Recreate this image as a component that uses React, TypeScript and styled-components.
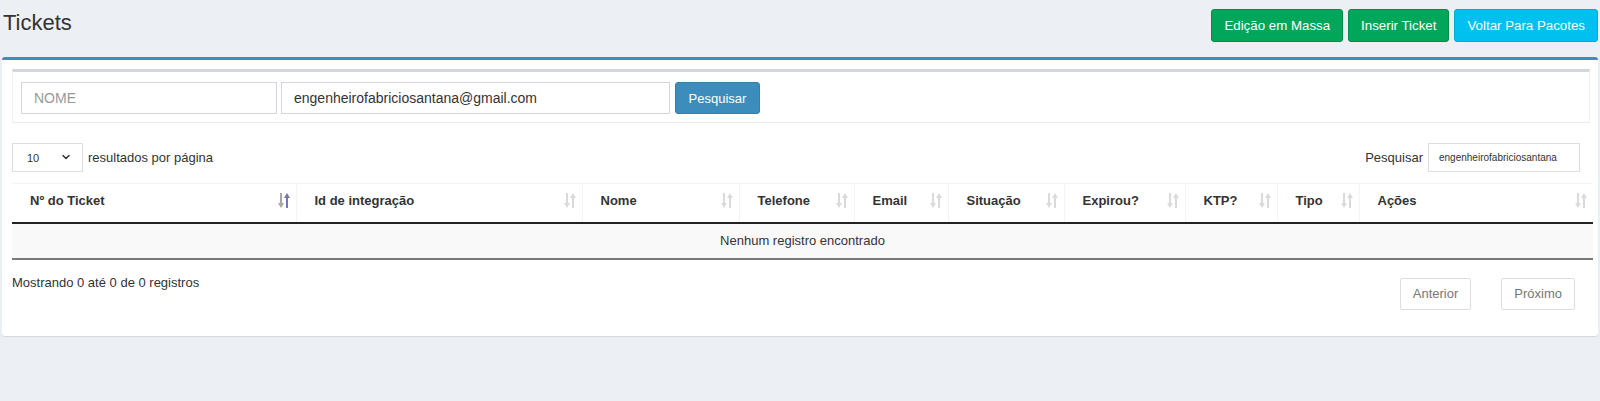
import styled, { createGlobalStyle } from "styled-components";
import { ChevronDown } from "lucide-react";

const GlobalStyle = createGlobalStyle`
    body {
        margin:0;
        background:#ecf0f5;
        font-family:"Liberation Sans", Arial, sans-serif;
        color:#333;
    }
    * { box-sizing:border-box; }
`;

const columns = [
    { label: "Nº do Ticket", width: 284, active: true },
    { label: "Id de integração", width: 286 },
    { label: "Nome", width: 157 },
    { label: "Telefone", width: 115 },
    { label: "Email", width: 94 },
    { label: "Situação", width: 116 },
    { label: "Expirou?", width: 121 },
    { label: "KTP?", width: 92 },
    { label: "Tipo", width: 82 },
    { label: "Ações", width: 234 },
];

// two arrows, the up one tinted when the column is sorted
const SortIcon = ({ active }: { active?: boolean }) => (
    <svg width="12" height="17" viewBox="0 0 12 17">
        <path d="M2 1h2v10h2l-3 5-3-5h2z" fill={active ? "#a8a8a8" : "#dadada"} />
        <path d="M9 1l3 5h-2v10H8V6H6z" fill={active ? "#7474b8" : "#dadada"} />
    </svg>
);

const App = () => {
    return (
        <Page>
            <GlobalStyle />
            <HeaderBar>
                <Title>Tickets</Title>
                <ButtonGroup>
                    <HeadButton $variant="success">Edição em Massa</HeadButton>
                    <HeadButton $variant="success">Inserir Ticket</HeadButton>
                    <HeadButton $variant="info">Voltar Para Pacotes</HeadButton>
                </ButtonGroup>
            </HeaderBar>

            <Box>
                <FilterPanel>
                    <TextInput $width={256} placeholder="NOME" />
                    <TextInput $width={389} defaultValue="engenheirofabriciosantana@gmail.com" />
                    <SearchButton>Pesquisar</SearchButton>
                </FilterPanel>

                <LengthRow>
                    <LengthLabel>
                        <SelectWrap>
                            <Select defaultValue="10">
                                <option>10</option>
                                <option>25</option>
                                <option>50</option>
                                <option>100</option>
                            </Select>
                            <SelectArrow>
                                <ChevronDown size={12} strokeWidth={3} />
                            </SelectArrow>
                        </SelectWrap>
                        resultados por página
                    </LengthLabel>
                    <LengthLabel>
                        Pesquisar
                        <FilterInput defaultValue="engenheirofabriciosantana" />
                    </LengthLabel>
                </LengthRow>

                <Table>
                    <colgroup>
                        {columns.map((c) => (
                            <col key={c.label} style={{ width: c.width }} />
                        ))}
                    </colgroup>
                    <thead>
                        <tr>
                            {columns.map((c) => (
                                <Th key={c.label}>
                                    <HeadInner>
                                        <span>{c.label}</span>
                                        <SortIcon active={c.active} />
                                    </HeadInner>
                                </Th>
                            ))}
                        </tr>
                    </thead>
                    <tbody>
                        <tr>
                            <EmptyCell colSpan={columns.length}>Nenhum registro encontrado</EmptyCell>
                        </tr>
                    </tbody>
                </Table>

                <FooterRow>
                    <Info>Mostrando 0 até 0 de 0 registros</Info>
                    <Paging>
                        <PageButton>Anterior</PageButton>
                        <PageButton>Próximo</PageButton>
                    </Paging>
                </FooterRow>
            </Box>
        </Page>
    )
}

const Page = styled.div`
    min-height:401px;
    padding:0 2px;
`;

const HeaderBar = styled.div`
    display:flex;
    justify-content:space-between;
    align-items:flex-start;
    height:57px;
`;

const Title = styled.h1`
    margin:11px 0 0 1px;
    font-size:22px;
    font-weight:normal;
    line-height:24px;
    color:#333;
`;

const ButtonGroup = styled.div`
    display:flex;
    gap:5px;
    margin-top:9px;
`;

const HeadButton = styled.button<{ $variant: "success" | "info" }>`
    height:33px;
    padding:0 12px;
    font-family:inherit;
    font-size:13.3px;
    color:#fff;
    border-radius:3px;
    border:1px solid ${(p) => (p.$variant === "success" ? "#008d4c" : "#00acd6")};
    background:${(p) => (p.$variant === "success" ? "#00a65a" : "#00c0ef")};
    cursor:pointer;
`;

const Box = styled.div`
    background:#fff;
    border-top:3px solid #3c8dbc;
    border-radius:3px;
    box-shadow:0 1px 1px rgba(0,0,0,.1);
    padding:9px 5px 26px 10px;
`;

const FilterPanel = styled.div`
    display:flex;
    align-items:center;
    gap:4px;
    margin-right:3px;
    padding:10px 8px 8px;
    border-top:3px solid #d2d6de;
    border-left:1px solid #f2f2f2;
    border-right:1px solid #f2f2f2;
    border-bottom:1px solid #eaeaea;
`;

const TextInput = styled.input<{ $width: number }>`
    width:${(p) => p.$width}px;
    height:32px;
    padding:0 12px;
    border:1px solid #d2d6de;
    font-family:inherit;
    font-size:14px;
    color:#333;
    outline:none;
    &::placeholder { color:#999; }
`;

const SearchButton = styled.button`
    margin-left:1px;
    height:32px;
    width:85px;
    font-family:inherit;
    font-size:13px;
    color:#fff;
    background:#3c8dbc;
    border:1px solid #367fa9;
    border-radius:3px;
`;

const LengthRow = styled.div`
    display:flex;
    justify-content:space-between;
    align-items:center;
    margin-top:20px;
    padding-right:13px;
`;

const LengthLabel = styled.label`
    display:flex;
    align-items:center;
    gap:5px;
    font-size:13px;
    color:#333;
`;

const SelectWrap = styled.div`
    position:relative;
`;

const Select = styled.select`
    appearance:none;
    width:71px;
    height:29px;
    padding:0 0 0 14px;
    border:1px solid #ddd;
    background:#fff;
    font-family:inherit;
    font-size:11px;
    color:#333;
    outline:none;
`;

const SelectArrow = styled.span`
    position:absolute;
    right:11px;
    top:8px;
    display:flex;
    color:#333;
    pointer-events:none;
`;

const FilterInput = styled.input`
    width:152px;
    height:29px;
    padding:0 0 0 10px;
    border:1px solid #ddd;
    font-family:inherit;
    font-size:10px;
    color:#333;
    outline:none;
`;

const Table = styled.table`
    width:1581px;
    margin-top:11px;
    border-collapse:collapse;
    table-layout:fixed;
`;

const Th = styled.th`
    height:39px;
    padding:0 6px 5px 18px;
    text-align:left;
    font-size:13px;
    font-weight:bold;
    color:#333;
    border-top:1px solid #f4f4f4;
    border-right:1px solid #f4f4f4;
    border-bottom:2px solid #222;
    &:last-child { border-right:none; }
`;

const HeadInner = styled.div`
    display:flex;
    justify-content:space-between;
    align-items:center;
`;

const EmptyCell = styled.td`
    height:36px;
    text-align:center;
    font-size:13px;
    color:#333;
    background:#f9f9f9;
    border-bottom:2px solid #7a7a7a;
`;

const FooterRow = styled.div`
    display:flex;
    justify-content:space-between;
    align-items:flex-start;
    padding-right:18px;
`;

const Info = styled.div`
    padding-top:15px;
    font-size:13px;
    color:#333;
`;

const Paging = styled.div`
    display:flex;
    gap:30px;
    margin-top:18px;
`;

const PageButton = styled.button`
    height:32px;
    padding:0 12px;
    font-family:inherit;
    font-size:13px;
    color:#777;
    background:#fff;
    border:1px solid #ddd;
    border-radius:2px;
`;

export default App
